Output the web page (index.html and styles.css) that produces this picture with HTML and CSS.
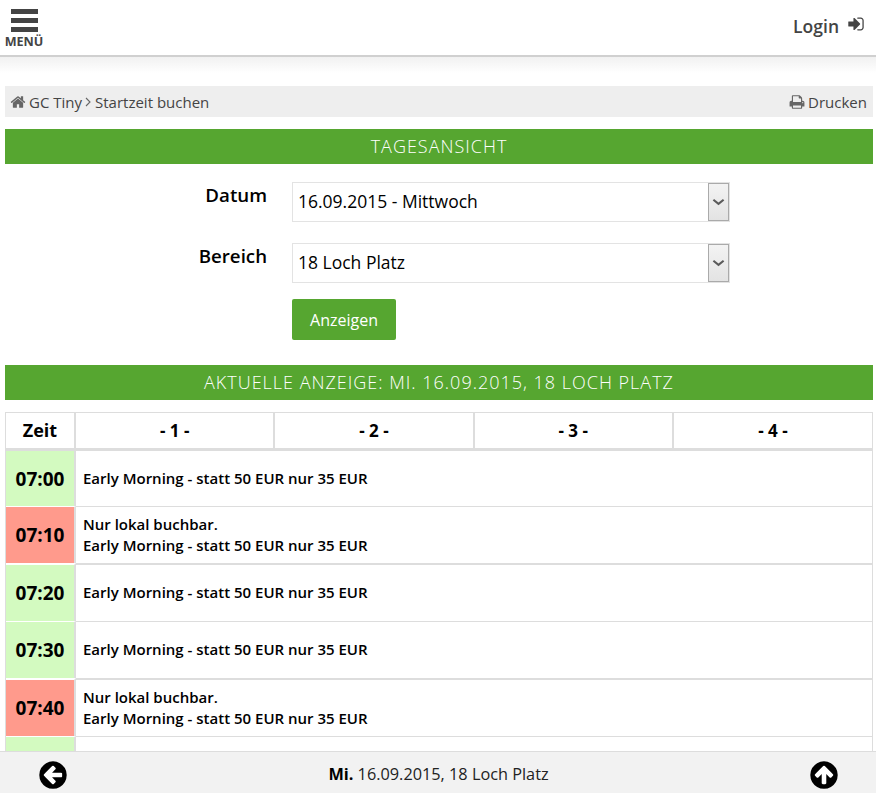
FILE: index.html
```html
<!DOCTYPE html>
<html lang="de">
<head>
<meta charset="utf-8">
<title>Startzeit buchen</title>
<link rel="stylesheet" href="styles.css">
</head>
<body>
<header class="topbar">
  <a class="menu">
    <span class="bars"><i></i><i></i><i></i></span>
    <span class="menu-label">MENÜ</span>
  </a>
  <a class="login">Login
    <svg class="login-icon" viewBox="0 0 1792 1792"><path d="M1312 896q0 26-19 45l-544 544q-19 19-45 19t-45-19-19-45v-288h-448q-26 0-45-19t-19-45v-384q0-26 19-45t45-19h448v-288q0-26 19-45t45-19 45 19l544 544q19 19 19 45zm352-352v704q0 119-84.500 203.500t-203.500 84.500h-320q-13 0-22.500-9.500t-9.500-22.500q0-4-1-20t-.5-26.500 3-23.500 10-19.500 20.500-6.500h320q66 0 113-47t47-113v-704q0-66-47-113t-113-47h-312l-11.500-1-11.500-3-8-5.500-7-9-2-13.500q0-4-1-20t-.5-26.500 3-23.500 10-19.500 20.500-6.500h320q119 0 203.500 84.500t84.500 203.500z"/></svg>
  </a>
</header>
<main class="content">
  <nav class="crumbs">
    <div class="crumb-path">
      <svg class="crumb-icon" viewBox="0 0 1792 1792"><path d="M1472 992v480q0 26-19 45t-45 19h-384v-384h-256v384h-384q-26 0-45-19t-19-45v-480q0-1 .5-3t.5-3l575-474 575 474q1 2 1 6zm223-69l-62 74q-8 9-21 11h-3q-13 0-21-7l-692-577-692 577q-12 8-24 7-13-2-21-11l-62-74q-8-10-7-23.500t11-21.500l719-599q32-26 76-26t76 26l244 204v-195q0-14 9-23t23-9h192q14 0 23 9t9 23v408l219 182q10 8 11 21.500t-7 23.500z"/></svg>
      <span>GC Tiny</span>
      <svg class="crumb-sep" viewBox="0 0 6 10"><path d="M1 1l4 4-4 4" fill="none" stroke="#666" stroke-width="1.100"/></svg>
      <span>Startzeit buchen</span>
    </div>
    <a class="print">
      <svg class="crumb-icon" viewBox="0 0 1792 1792"><path d="M448 1536h896v-256h-896v256zm0-640h896v-384h-160q-40 0-68-28t-28-68v-160h-640v640zm1152 64q0-26-19-45t-45-19-45 19-19 45 19 45 45 19 45-19 19-45zm128 0v416q0 13-9.500 22.500t-22.500 9.500h-224v160q0 40-28 68t-68 28h-960q-40 0-68-28t-28-68v-160h-224q-13 0-22.500-9.500t-9.500-22.500v-416q0-79 56.500-135.500t135.500-56.500h64v-544q0-40 28-68t68-28h672q40 0 88 20t76 48l152 152q28 28 48 76t20 88v256h64q79 0 135.500 56.500t56.500 135.500z"/></svg>
      <span>Drucken</span>
    </a>
  </nav>

  <h2 class="band">TAGESANSICHT</h2>

  <form class="filter">
    <div class="field">
      <label class="field-label" for="datum">Datum</label>
      <div class="select-wrap">
        <select class="select" id="datum"><option>16.09.2015 - Mittwoch</option></select>
        <span class="select-arrow"><svg viewBox="0 0 14 10"><path d="M1.500 2.500L7 7l5.500-4.500" fill="none" stroke="#5a5a5a" stroke-width="2.200"/></svg></span>
      </div>
    </div>
    <div class="field">
      <label class="field-label" for="bereich">Bereich</label>
      <div class="select-wrap">
        <select class="select" id="bereich"><option>18 Loch Platz</option></select>
        <span class="select-arrow"><svg viewBox="0 0 14 10"><path d="M1.500 2.500L7 7l5.500-4.500" fill="none" stroke="#5a5a5a" stroke-width="2.200"/></svg></span>
      </div>
    </div>
    <button class="submit" type="button">Anzeigen</button>
  </form>

  <h2 class="band band-current">AKTUELLE ANZEIGE: MI. 16.09.2015, 18 LOCH PLATZ</h2>

  <table class="times">
    <colgroup><col class="col-time"><col class="col-slot"><col class="col-slot"><col class="col-slot"><col></colgroup>
    <thead>
      <tr><th>Zeit</th><th>- 1 -</th><th>- 2 -</th><th>- 3 -</th><th>- 4 -</th></tr>
    </thead>
    <tbody>
      <tr class="row">
        <td class="time free">07:00</td>
        <td class="info" colspan="4">Early Morning - statt 50 EUR nur 35 EUR</td>
      </tr>
      <tr class="row">
        <td class="time local">07:10</td>
        <td class="info" colspan="4">Nur lokal buchbar.<br>Early Morning - statt 50 EUR nur 35 EUR</td>
      </tr>
      <tr class="row row-hour">
        <td class="time free">07:20</td>
        <td class="info" colspan="4">Early Morning - statt 50 EUR nur 35 EUR</td>
      </tr>
      <tr class="row">
        <td class="time free">07:30</td>
        <td class="info" colspan="4">Early Morning - statt 50 EUR nur 35 EUR</td>
      </tr>
      <tr class="row row-hour">
        <td class="time local">07:40</td>
        <td class="info" colspan="4">Nur lokal buchbar.<br>Early Morning - statt 50 EUR nur 35 EUR</td>
      </tr>
      <tr class="row">
        <td class="time free"></td>
        <td class="info" colspan="4"></td>
      </tr>
    </tbody>
  </table>
</main>
<footer class="dock">
  <a class="dock-btn">
    <svg viewBox="0 0 1792 1792"><circle cx="896" cy="896" r="600" fill="#fff"/><path d="M1408 960v-128q0-26-19-45t-45-19h-502l189-189q19-19 19-45t-19-45l-91-91q-18-18-45-18t-45 18l-362 362-91 91q-18 18-18 45t18 45l91 91 362 362q18 18 45 18t45-18l91-91q18-18 18-45t-18-45l-189-189h502q26 0 45-19t19-45zm256-64q0 209-103 385.500t-279.500 279.500-385.500 103-385.500-103-279.500-279.500-103-385.500 103-385.500 279.500-279.500 385.500-103 385.500 103 279.500 279.500 103 385.500z"/></svg>
  </a>
  <div class="dock-title"><b>Mi.</b> 16.09.2015, 18 Loch Platz</div>
  <a class="dock-btn">
    <svg viewBox="0 0 1792 1792"><circle cx="896" cy="896" r="600" fill="#fff"/><path d="M1412 895q0-27-18-45l-91-91-362-362q-18-18-45-18t-45 18l-362 362-91 91q-18 18-18 45t18 45l91 91q18 18 45 18t45-18l189-189v502q0 26 19 45t45 19h128q26 0 45-19t19-45v-502l189 189q19 19 45 19t45-19l91-91q18-18 18-45zm252 1q0 209-103 385.500t-279.500 279.500-385.500 103-385.500-103-279.500-279.500-103-385.500 103-385.500 279.500-279.500 385.500-103 385.500 103 279.500 279.500 103 385.500z"/></svg>
  </a>
</footer>
</body>
</html>
```
FILE: styles.css
```css
* { box-sizing: border-box; }
html, body { height: 100%; }
body {
  margin: 0;
  overflow: hidden;
  background: #fff;
  color: #000;
  font-family: "Open Sans", "Liberation Sans", sans-serif;
  font-size: 15px;
}
.topbar {
  height: 57px;
  border-bottom: 2px solid #d0d0d0;
  display: flex;
  justify-content: space-between;
  align-items: flex-start;
  padding: 0 11px 0 5px;
}
.menu { width: 38px; display: flex; flex-direction: column; align-items: center; padding-top: 9px; }
.bars { display: flex; flex-direction: column; gap: 4px; width: 27px; }
.bars i { display: block; height: 5px; background: #444; }
.menu-label { font-size: 12.600px; font-weight: 700; line-height: 13px; color: #444; margin-top: 3px; }
.login { display: flex; align-items: center; gap: 8px; color: #444; font-size: 17.500px; font-weight: 600; height: 52px; }
.login-icon { width: 18px; height: 18px; fill: #444; margin-top: -4px; }
.content { background: linear-gradient(#f1f1f1, #fff 16px) no-repeat; padding: 29px 3px 0 5px; }
.crumbs {
  height: 31px;
  background: #eee;
  display: flex;
  justify-content: space-between;
  align-items: center;
  padding: 0 6px 0 5px;
  color: #444;
  font-size: 15px;
}
.crumb-path, .print { display: flex; align-items: center; }
.crumb-icon { width: 16px; height: 16px; fill: #666; margin-right: 3px; }
.crumb-sep { width: 6px; height: 10px; margin: 0 4px 0 3px; }
.band {
  margin: 12px 0 0;
  height: 35px;
  background: #56a630;
  color: #fff;
  font-size: 18px;
  font-weight: 300;
  line-height: 35px;
  letter-spacing: 1px;
  text-align: center;
}
.filter { padding-top: 18px; padding-left: 287px; }
.field { display: flex; align-items: flex-start; margin-bottom: 21px; margin-left: -287px; }
.field-label { width: 262px; font-size: 18.700px; font-weight: 600; line-height: 26px; text-align: right; margin-right: 25px; }
.select-wrap { position: relative; width: 438px; height: 40px; }
.select {
  display: block;
  width: 100%;
  height: 100%;
  appearance: none;
  -webkit-appearance: none;
  border: 1px solid #e3e3e3;
  border-radius: 0;
  background: #fff;
  color: #000;
  padding: 0 5px 2px;
  font: 400 17.500px "Open Sans", sans-serif;
}
.select-arrow {
  position: absolute;
  top: 1px;
  right: 1px;
  width: 21px;
  height: 38px;
  border: 1px solid #aaa;
  background: linear-gradient(#f3f3f3, #e3e3e3);
  display: flex;
  align-items: center;
  justify-content: center;
}
.select-arrow svg { width: 13px; height: 10px; }
.submit {
  display: block;
  width: 104px;
  height: 41px;
  margin-top: -5px;
  border: 0;
  border-radius: 2px;
  background: #56a630;
  color: #fff;
  font: 400 16px "Open Sans", sans-serif;
}
.band-current { margin-top: 25px; }
.times {
  width: 868px;
  margin-top: 12px;
  table-layout: fixed;
  border-collapse: separate;
  border-spacing: 0;
  border: 1px solid #ddd;
  border-bottom: 0;
}
.col-time { width: 70px; }
.col-slot { width: 199.250px; }
.times th {
  height: 38px;
  padding: 0 0 1px;
  border-right: 2px solid #ddd;
  border-bottom: 3px solid #ddd;
  font-size: 17px;
  font-weight: 700;
  text-align: center;
}
.times th:first-child { font-size: 18px; }
.times th:last-child { border-right: 0; }
.time {
  height: 57px;
  padding: 0;
  border-right: 2px solid #ddd;
  font-size: 19px;
  font-weight: 700;
  text-align: center;
}
.info {
  padding: 0 7px;
  font-size: 15px;
  font-weight: 600;
  line-height: 21.500px;
}
.row .time, .row .info { border-top: 1px solid #ddd; }
tbody .row:first-child .time, tbody .row:first-child .info { border-top: 0; height: 55px; }
.row-hour .time, .row-hour .info { border-top-width: 2px; height: 58px; }
.row .time { border-top-color: #fff; }
.free { background: #d3fac0; }
.local { background: #ff9a8c; }
.dock {
  position: fixed;
  left: 0;
  right: 0;
  bottom: 0;
  height: 42px;
  background: #f2f2f2;
  border-top: 1px solid #ddd;
  display: flex;
  align-items: center;
  justify-content: space-between;
  padding: 0 36px 0 37px;
  color: #222;
}
.dock-btn { width: 32px; height: 32px; margin-top: 4px; display: block; }
.dock-btn svg { width: 32px; height: 32px; display: block; }
.dock-title { font-size: 16.300px; margin-top: 3px; }
.dock-title b { font-weight: 700; color: #000; }
```
